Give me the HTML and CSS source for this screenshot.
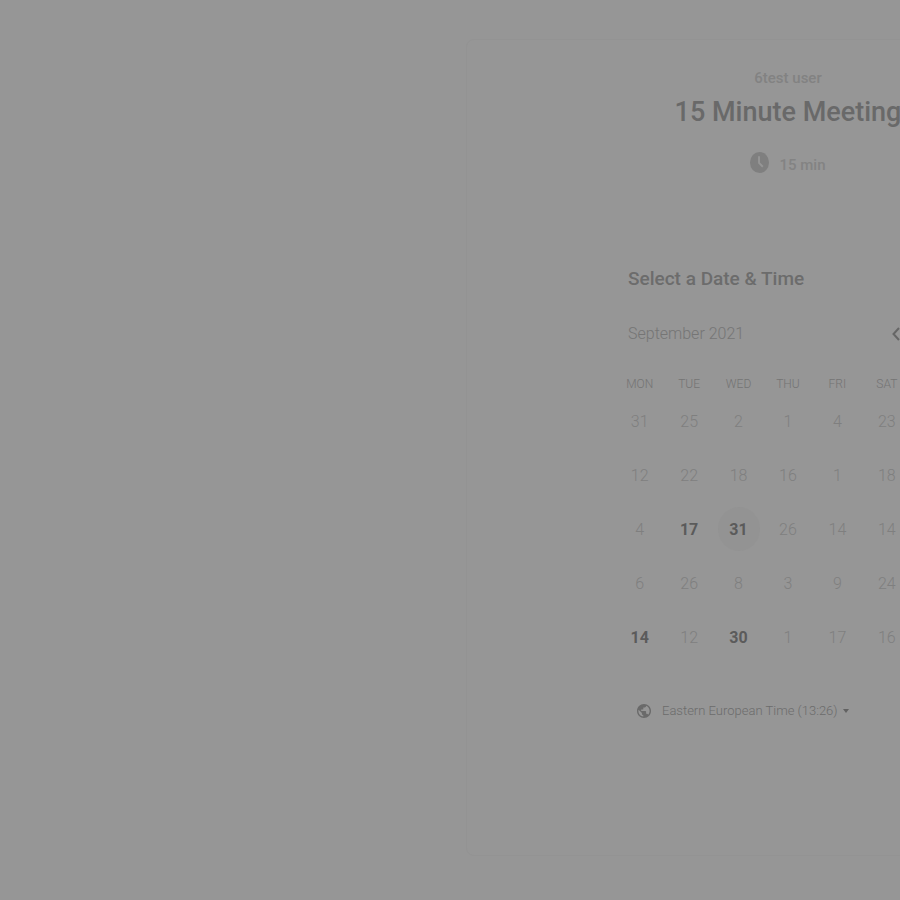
FILE: index.html
```
<!DOCTYPE html>
<html lang="en">
<head>
<meta charset="utf-8">
<meta name="viewport" content="width=device-width, initial-scale=1">
<title>15 Minute Meeting</title>
<link rel="stylesheet" href="styles.css">
</head>
<body>
<main class="card">
  <div class="content">
    <header class="event">
      <p class="host">6test user</p>
      <h1 class="title">15 Minute Meeting</h1>
      <p class="duration">
        <svg class="clock" viewBox="0 0 20 22" preserveAspectRatio="none" aria-hidden="true"><ellipse cx="10" cy="11" rx="10" ry="11"/><path d="M9.500 4.500v7l4 4"/></svg>
        <span>15 min</span>
      </p>
    </header>
    <h2 class="heading">Select a Date &amp; Time</h2>
    <div class="month">
      <span>September 2021</span>
      <button class="previous" type="button" aria-label="Previous month"><svg viewBox="0 0 8 14" aria-hidden="true"><path d="M7 1L1.500 7l5.500 6"/></svg></button>
    </div>
    <table class="calendar">
      <thead><tr><th>MON</th><th>TUE</th><th>WED</th><th>THU</th><th>FRI</th><th>SAT</th><th></th></tr></thead>
      <tbody>
        <tr><td>31</td><td>25</td><td>2</td><td>1</td><td>4</td><td>23</td><td></td></tr>
        <tr><td>12</td><td>22</td><td>18</td><td>16</td><td>1</td><td>18</td><td></td></tr>
        <tr><td>4</td><td><button class="day" type="button">17</button></td><td><button class="day selected" type="button">31</button></td><td>26</td><td>14</td><td>14</td><td></td></tr>
        <tr><td>6</td><td>26</td><td>8</td><td>3</td><td>9</td><td>24</td><td></td></tr>
        <tr><td><button class="day" type="button">14</button></td><td>12</td><td><button class="day" type="button">30</button></td><td>1</td><td>17</td><td>16</td><td></td></tr>
      </tbody>
    </table>
    <button class="timezone" type="button">
      <svg class="globe" viewBox="2 2 20 20" aria-hidden="true"><path d="M12 2C6.480 2 2 6.480 2 12s4.480 10 10 10 10-4.480 10-10S17.520 2 12 2zm-1 17.930c-3.950-.490-7-3.850-7-7.930 0-.620.080-1.210.210-1.790L9 15v1c0 1.100.900 2 2 2v1.930zm6.900-2.540c-.260-.810-1-1.390-1.900-1.390h-1v-3c0-.550-.450-1-1-1H8v-2h2c.550 0 1-.450 1-1V7h2c1.100 0 2-.900 2-2v-.410c2.930 1.190 5 4.060 5 7.410 0 2.080-.800 3.970-2.100 5.390z"/></svg>
      <span>Eastern European Time (13:26)</span>
      <svg class="caret" viewBox="0 0 6 4" aria-hidden="true"><path d="M0 0h6L3 4z"/></svg>
    </button>
  </div>
</main>
</body>
</html>
```
FILE: styles.css
```
* {
  box-sizing: border-box;
}

body {
  margin: 0;
  padding-top: 39px;
  overflow: hidden;
  background: #969696;
  color: #6c6c6c;
  font-family: Roboto, "Liberation Sans", sans-serif;
  font-size: 16px;
}

button {
  padding: 0;
  border: 0;
  background: none;
  color: inherit;
  font: inherit;
}

.card {
  margin: 0 -210px 0 466px;
  padding: 28px 0 134px;
  border: 1px solid #939393;
  border-radius: 8px;
}

.content {
  max-width: 346px;
  margin: 0 auto;
}

.event {
  display: flex;
  flex-direction: column;
  align-items: center;
}

.host,
.title,
.duration,
.heading {
  margin: 0;
}

.host {
  color: #828282;
  font-size: 15px;
  font-weight: 500;
  line-height: 20px;
}

.title {
  margin-top: 4px;
  color: #696969;
  font-size: 27px;
  font-weight: 500;
  line-height: 40px;
  white-space: nowrap;
}

.duration {
  display: flex;
  align-items: center;
  gap: 10px;
  margin-top: 20px;
  color: #838383;
  font-size: 15px;
  font-weight: 500;
  line-height: 24px;
}

.clock {
  width: 19px;
  height: 21px;
  margin-bottom: 4px;
  fill: #7f7f7f;
}

.clock path {
  fill: none;
  stroke: #969696;
  stroke-width: 2;
}

.heading {
  margin: 90px 0 0 13px;
  color: #6c6c6c;
  font-size: 19px;
  font-weight: 500;
  line-height: 24px;
}

.month {
  display: flex;
  align-items: center;
  justify-content: space-between;
  margin: 31px 61px 0 13px;
  color: #757575;
  font-weight: 300;
  line-height: 24px;
}

.previous {
  display: flex;
}

.previous svg {
  width: 8px;
  height: 14px;
  fill: none;
  stroke: #666666;
  stroke-width: 2;
}

.calendar {
  width: 100%;
  margin-top: 28px;
  border-collapse: collapse;
  table-layout: fixed;
  text-align: center;
}

.calendar th {
  height: 20px;
  padding: 0;
  color: #747474;
  font-size: 12px;
  font-weight: 300;
}

.calendar td {
  height: 54px;
  padding: 0;
  color: #7f7f7f;
  font-weight: 300;
}

.day {
  width: 42px;
  height: 44px;
  border-radius: 50%;
  color: #5b5b5b;
  font-weight: 700;
}

.calendar .selected {
  background: #939393;
}

.timezone {
  display: flex;
  align-items: center;
  margin: 37px 0 0 22px;
  color: #6c6c6c;
  font-size: 13px;
  font-weight: 300;
  line-height: 20px;
  white-space: nowrap;
}

.globe {
  width: 14px;
  height: 14px;
  margin-right: 11px;
  fill: #6a6a6a;
}

.caret {
  width: 6px;
  height: 4px;
  margin-left: 5px;
  fill: #626262;
}
```
